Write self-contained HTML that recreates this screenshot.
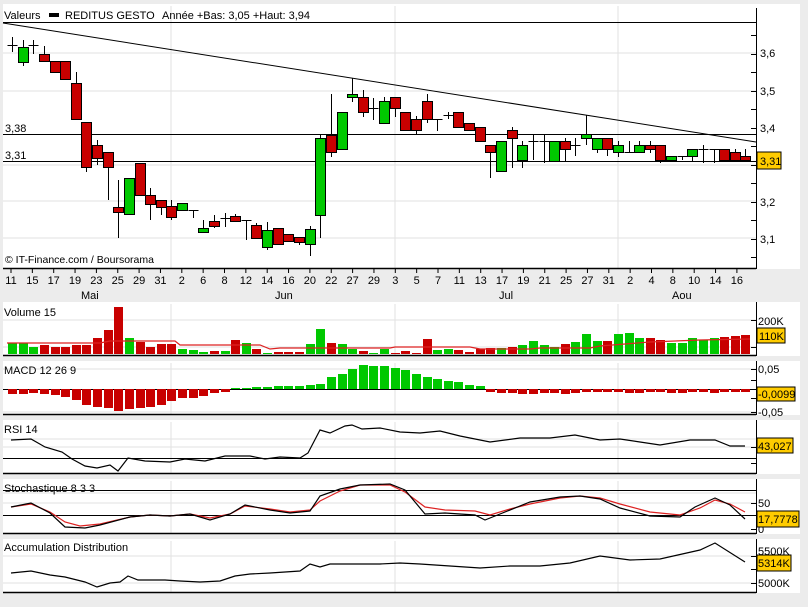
<!DOCTYPE html>
<html><head><meta charset="utf-8"><style>
html,body{margin:0;padding:0;background:#ececec;width:808px;height:607px;overflow:hidden}
svg{display:block;font-family:"Liberation Sans",sans-serif}
text{font-size:11px;fill:#000}
</style></head><body>
<svg id="s" width="808" height="607" xmlns="http://www.w3.org/2000/svg">
<rect width="808" height="607" fill="#ececec"/>
<!-- panel backgrounds -->
<rect x="3" y="4" width="797" height="265" fill="#fff"/>
<rect x="3" y="302" width="797" height="54" fill="#fff"/>
<rect x="3" y="361" width="797" height="54" fill="#fff"/>
<rect x="3" y="420" width="797" height="54" fill="#fff"/>
<rect x="3" y="479" width="797" height="55" fill="#fff"/>
<rect x="3" y="539" width="797" height="54" fill="#fff"/>
<g id="grid" stroke="#e2e2e2" stroke-width="1"></g>
<g id="g"></g>
<!-- main text -->
<text x="4" y="19">Valeurs</text>
<rect x="49" y="13" width="10" height="4" fill="#000"/>
<text x="65" y="19">REDITUS GESTO</text>
<text x="162" y="19">Année +Bas: 3,05 +Haut: 3,94</text>
<text x="5" y="132">3,38</text>
<text x="5" y="159">3,31</text>
<text x="5" y="263" style="font-size:10.5px">© IT-Finance.com / Boursorama</text>
<text x="760" y="57">3,6</text>
<text x="760" y="95">3,5</text>
<text x="760" y="132">3,4</text>
<text x="760" y="206">3,2</text>
<text x="760" y="243">3,1</text>
<rect x="757" y="152" width="24" height="17" fill="#ffcc00" stroke="#000"/>
<text x="760" y="165">3,31</text>
<g id="xl" style="font-size:11px"></g>
<text x="81" y="299">Mai</text>
<text x="275" y="299">Jun</text>
<text x="499" y="299">Jul</text>
<text x="672" y="299">Aou</text>
<text x="4" y="316">Volume 15</text>
<text x="758" y="325">200K</text>
<rect x="757" y="328" width="28" height="15" fill="#ffcc00" stroke="#000"/>
<text x="759" y="340">110K</text>
<text x="4" y="374">MACD 12 26 9</text>
<text x="758" y="373">0,05</text>
<rect x="757" y="387" width="38" height="14" fill="#ffcc00" stroke="#000"/>
<text x="758" y="398">-0,0099</text>
<text x="758" y="416">-0,05</text>
<text x="4" y="433">RSI 14</text>
<rect x="757" y="438" width="36" height="15" fill="#ffcc00" stroke="#000"/>
<text x="758" y="450">43,027</text>
<text x="4" y="492">Stochastique 8 3 3</text>
<text x="758" y="507">50</text>
<text x="758" y="533">0</text>
<rect x="757" y="511" width="42" height="16" fill="#ffcc00" stroke="#000"/>
<text x="758" y="523">17,7778</text>
<text x="4" y="551">Accumulation Distribution</text>
<text x="758" y="555">5500K</text>
<rect x="757" y="555" width="34" height="16" fill="#ffcc00" stroke="#000"/>
<text x="758" y="567">5314K</text>
<text x="758" y="587">5000K</text>
</svg>
<script>
var NS="http://www.w3.org/2000/svg",G=document.getElementById('g'),GR=document.getElementById('grid'),XL=document.getElementById('xl');
function el(p,t,a){var e=document.createElementNS(NS,t);for(var k in a)e.setAttribute(k,a[k]);p.appendChild(e);return e;}
function ln(p,x1,y1,x2,y2,c,w){return el(p,'line',{x1:x1,y1:y1,x2:x2,y2:y2,stroke:c||'#000','stroke-width':w||1});}
function pl(pts,c){el(G,'polyline',{points:pts,fill:'none',stroke:c,'stroke-width':1.2});}
var GC='#00c800',RC='#c80000';
function X(i){return 12+i*10.63;}
// gridlines
[53,91,165,201,238].forEach(function(y){ln(GR,3,y,756,y,'#e2e2e2');});
[[304,356],[363,415],[422,474],[481,534],[541,593],[6,269]].forEach(function(r){[171,395,618].forEach(function(x){ln(GR,x,r[0],x,r[1],'#e2e2e2');});});
[320,347,369,412,439,447,493,503,556,583].forEach(function(y){ln(GR,3,y,756,y,'#e2e2e2');});
// main structure
ln(G,3,22.5,756,22.5);ln(G,3,134.5,756,134.5);ln(G,3,161.5,756,161.5);
ln(G,3,23,756,142);
ln(G,3,268.5,756,268.5,'#000',1.5);
[[8,269],[302,356],[361,415],[420,474],[479,534],[539,593]].forEach(function(r){ln(G,756.5,r[0],756.5,r[1]);});
[355.5,414.5,473.5,533.5,592.5].forEach(function(y){ln(G,3,y,756,y,'#000',1.5);});
ln(G,3,389.5,756,389.5);ln(G,3,458.5,756,458.5);ln(G,3,490.5,756,490.5);ln(G,3,515.5,756,515.5);
// right ticks
for(var y=35;y<268;y+=18.5)ln(G,751,Math.round(y)+.5,756,Math.round(y)+.5);
[[320,347],[369,380,398,412],[447,463],[503,529],[556,569,583]].forEach(function(a){a.forEach(function(y){ln(G,751,y+.5,756,y+.5);});});
// x labels
var lb=['11','15','17','19','23','25','29','31','2','6','8','12','14','16','20','22','27','29','3','5','7','11','13','17','19','21','25','27','31','2','4','8','10','14','16'];
lb.forEach(function(t,k){var x=11+k*21.35;ln(G,x,269,x,273);var e=el(XL,'text',{x:x,y:284,'text-anchor':'middle'});e.textContent=t;});
// candles [wt,wb,bt,bb,c]
var C=[[37,52,45,45,'d'],[40,66,47,62,'g'],[40,54,45,45,'d'],[46,61,54,61,'r'],[61,72,61,72,'r'],[61,79,61,79,'r'],[72,119,83,119,'r'],[122,172,122,167,'r'],[140,165,145,158,'r'],[152,200,152,167,'r'],
[180,238,207,212,'r'],[178,214,178,214,'g'],[163,195,163,195,'r'],[188,220,195,204,'r'],[200,215,200,207,'r'],[200,220,206,217,'r'],[203,210,203,210,'g'],[210,218,210,210,'d'],[220,233,228,232,'g'],[215,228,221,226,'r'],
[213,227,218,218,'d'],[214,221,216,221,'r'],[220,240,220,220,'d'],[223,238,225,238,'r'],[222,250,230,247,'g'],[228,244,228,244,'r'],[234,241,234,241,'r'],[237,245,237,242,'r'],[226,256,229,244,'g'],[135,238,138,215,'g'],
[94,157,135,152,'r'],[112,149,112,149,'g'],[78,102,94,97,'g'],[90,117,97,112,'r'],[98,120,108,108,'d'],[97,123,101,123,'g'],[97,117,97,108,'r'],[112,130,112,130,'r'],[116,134,119,130,'r'],[94,123,101,119,'r'],
[119,131,119,119,'d'],[112,119,115,115,'d'],[112,127,112,127,'r'],[123,130,123,130,'r'],[127,141,127,141,'r'],[145,178,145,152,'r'],[141,171,141,171,'g'],[127,168,130,138,'r'],[141,168,145,160,'g'],[134,160,141,141,'d'],
[134,163,141,141,'d'],[141,161,141,161,'g'],[138,161,141,149,'r'],[138,156,145,145,'d'],[115,145,134,138,'g'],[138,153,138,149,'g'],[138,156,138,149,'r'],[141,157,145,152,'g'],[141,152,152,152,'d'],[141,152,145,152,'g'],
[141,153,145,149,'r'],[145,163,145,160,'r'],[156,160,156,160,'g'],[156,160,156,156,'d'],[149,162,149,156,'g'],[145,163,149,149,'d'],[149,163,149,149,'d'],[149,160,149,160,'r'],[149,160,152,160,'r'],[149,160,156,160,'r']];
C.forEach(function(c,i){var x=Math.round(X(i))+.5;ln(G,x,c[0],x,c[1]);
 if(c[4]=='d'){ln(G,x-5,c[2]+.5,x+5,c[2]+.5);}else{el(G,'rect',{x:x-5,y:c[2]+.5,width:10,height:Math.max(c[3]-c[2],3),fill:c[4]=='g'?GC:RC,stroke:'#000'});}});
// volume
var V=[343,343,347,345,347,347,345,345,338,330,307,338,342,347,344,344,349,350,352,351,351,340,343,349,353,352,352,352,344,329,343,344,349,351,353,349,353,351,353,339,350,349,350,352,349,348,348,347,345,341,345,347,344,342,334,341,341,334,333,338,338,340,343,343,338,340,338,337,336,335];
V.forEach(function(v,i){var c=C[i][4];el(G,'rect',{x:Math.round(X(i))-4,y:v,width:9,height:354-v,fill:c=='r'?RC:GC});});
pl('7,343 100,343 110,341 175,341 180,345 260,345 270,349 280,348 390,348 395,347 470,347 480,349 530,349 540,348 590,348 600,346 650,342 700,340 750,339',"#d22");
// macd
var M=[394,394,393,394,395,397,400,405,407,408,411,409,408,407,405,401,398,398,396,393,392,388,388,387,387,386,386,386,385,384,377,374,369,365,366,366,368,370,374,377,379,381,382,385,386,392,393,393,394,394,393,393,394,393,392,392,392,392,393,393,392,392,393,393,392,392,393,392,392,392];
M.forEach(function(m,i){var x=Math.round(X(i))-4;el(G,'rect',{x:x,y:Math.min(m,389),width:9,height:Math.max(Math.abs(m-389),1),fill:m>389?RC:GC});});
// rsi
pl('11,440 31,439 45,447 62,452 72,459 85,466 97,468 110,465 118,471 128,458 145,461 170,462 185,459 205,461 225,456 250,456 265,459 280,457 300,458 308,453 320,430 330,433 345,426 352,425 362,429 380,428 400,432 420,433 440,431 460,436 490,442 520,438 550,438 575,435 600,440 620,439 640,442 660,445 690,440 715,440 730,446 745,446','#000');
// stochastic
pl('11,507 31,504 50,512 65,522 80,526 100,524 130,517 150,515 170,516 190,514 210,518 230,514 245,506 270,509 290,512 310,510 320,501 340,491 360,485 390,485 405,492 425,507 445,510 475,511 490,515 510,509 530,504 560,498 580,496 600,498 620,504 650,512 680,515 700,508 715,500 730,504 745,512','#d22');
pl('11,507 31,503 50,513 65,527 85,528 100,525 130,517 150,515 170,516 190,514 210,520 230,514 245,505 270,510 290,513 310,511 320,496 340,489 360,485 390,484 405,490 425,514 445,513 475,515 485,520 500,514 530,502 560,497 580,496 600,499 620,508 650,516 680,517 695,507 715,498 730,505 745,519','#000');
// acc dist
pl('11,573 31,571 50,575 65,577 85,582 97,587 110,583 120,582 128,576 138,580 165,580 180,581 200,582 220,581 235,576 250,574 270,573 300,571 310,564 320,567 330,564 380,564 400,563 420,564 450,566 480,568 510,566 540,566 570,563 600,556 630,560 660,559 700,550 715,543 745,562','#000');
</script>
</body></html>
